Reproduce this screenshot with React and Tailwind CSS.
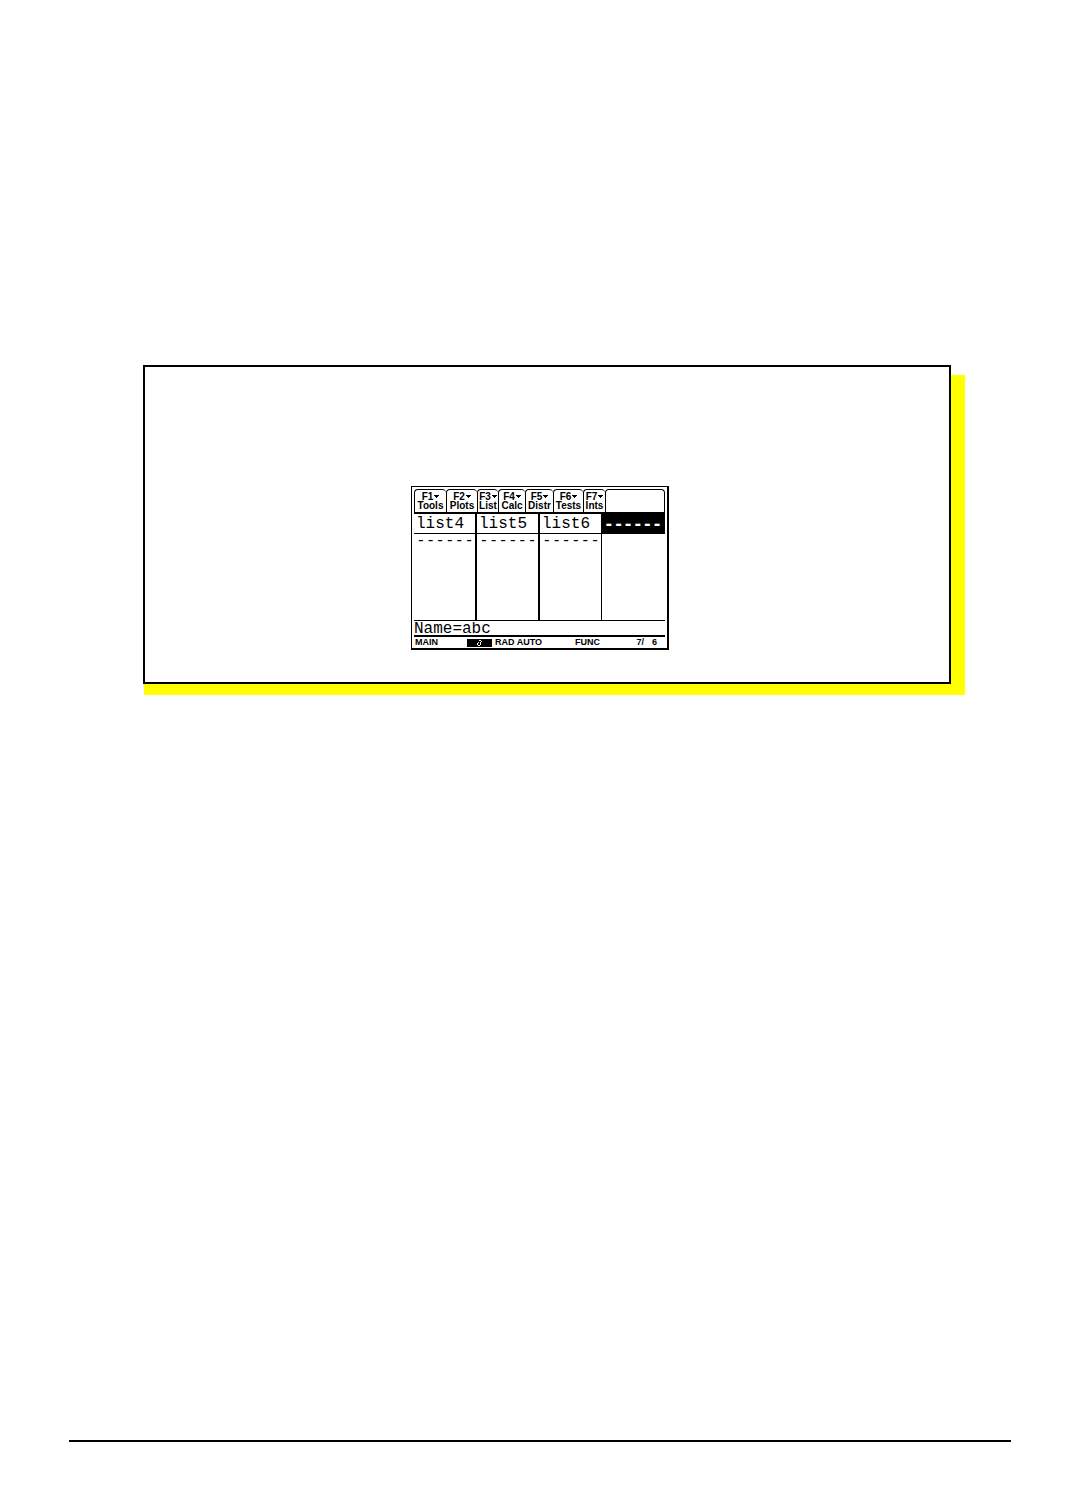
const TABS = [
  { k: 'F1', label: 'Tools', w: 'w-8' },
  { k: 'F2', label: 'Plots', w: 'w-[31px]' },
  { k: 'F3', label: 'List', w: 'w-[21px]' },
  { k: 'F4', label: 'Calc', w: 'w-[27px]' },
  { k: 'F5', label: 'Distr', w: 'w-7' },
  { k: 'F6', label: 'Tests', w: 'w-[30px]' },
  { k: 'F7', label: 'Ints', w: 'w-[22px]' },
];

const DASHES = '------';

function Toolbar() {
  return (
    <div className="flex h-[25px] border-b-2 border-black">
      {TABS.map((t) => (
        <button
          key={t.k}
          type="button"
          className={`${t.w} flex shrink-0 flex-col items-center justify-end rounded-t-[4px] border-t border-l border-black pb-0.5 text-[10px] leading-[9px] font-bold whitespace-nowrap`}
        >
          <span className="flex items-center gap-px">
            {t.k}
            <svg width="5" height="3" viewBox="0 0 5 3" shapeRendering="crispEdges" aria-hidden="true">
              <path d="M0 0h5v1H4v1H3v1H2V2H1V1H0z" />
            </svg>
          </span>
          <span>{t.label}</span>
        </button>
      ))}
      <div className="grow rounded-t-[4px] border-x border-t border-black" />
    </div>
  );
}

function Lists() {
  return (
    <table className="h-[106px] w-full table-fixed border-separate border-spacing-0 text-left font-['Liberation_Mono',monospace] text-base leading-[17px]">
      <thead>
        <tr className="h-5">
          <th className="w-[63px] border-r-2 border-b border-black p-0 pt-0.5 pl-0.5 font-normal">list4</th>
          <th className="w-[63px] border-r-2 border-b border-black p-0 pt-0.5 pl-0.5 font-normal">list5</th>
          <th className="w-[62px] border-r border-b border-black p-0 pt-0.5 pl-0.5 font-normal">list6</th>
          <th className="border-b border-black bg-black p-0 pl-0.5 font-['DejaVu_Sans_Mono',monospace] font-bold text-white">{DASHES}</th>
        </tr>
      </thead>
      <tbody>
        <tr className="align-top font-['DejaVu_Sans_Mono',monospace] leading-3">
          <td className="border-r-2 border-black p-0 pl-0.5">{DASHES}</td>
          <td className="border-r-2 border-black p-0 pl-0.5">{DASHES}</td>
          <td className="border-r border-black p-0 pl-0.5">{DASHES}</td>
          <td className="p-0" />
        </tr>
      </tbody>
    </table>
  );
}

function StatusBar() {
  return (
    <div className="flex h-[11px] items-center text-[9px] leading-[11px] font-bold whitespace-nowrap">
      <span className="w-[53px] pl-px">MAIN</span>
      <span className="flex h-2 w-[25px] items-center justify-center bg-black">
        <svg width="5" height="6" viewBox="0 0 5 6" shapeRendering="crispEdges" aria-hidden="true">
          <path d="M0 3h1v2H0zM1 5h2v1H1zM3 2h1v3H3zM2 0h2v1H2zM4 1h1v1H4zM1 2h1v1H1z" fill="white" />
        </svg>
      </span>
      <span className="w-[83px] pl-[3px]">RAD AUTO</span>
      <span>FUNC</span>
      <span className="ml-auto flex gap-2 pr-2">
        <span>7/</span>
        <span>6</span>
      </span>
    </div>
  );
}

function CalculatorScreen() {
  return (
    <section
      aria-label="Calculator screen"
      className="w-[258px] border-t border-r-2 border-b-2 border-l border-black bg-white pt-0.5 pr-0.5 pl-0.5"
    >
      <Toolbar />
      <Lists />
      <div className="flex h-[17px] items-baseline border-t border-b-2 border-black font-['Liberation_Mono',monospace] text-base leading-4">
        <label htmlFor="name">Name=</label>
        <input id="name" defaultValue="abc" className="h-[14px] w-24 bg-transparent p-0 outline-none" />
      </div>
      <StatusBar />
    </section>
  );
}

export default function App() {
  return (
    <div className="flex min-h-screen flex-col bg-white pt-[365px] pb-[70px] font-['Liberation_Sans',Arial,sans-serif] text-black">
      <main className="mr-[129px] ml-[143px] flex justify-center border-2 border-black bg-white pt-[119px] pr-3.5 pb-8 shadow-[1px_11px_0_0_#ffff00,14px_11px_0_0_#ffff00,14px_10px_0_0_#ffff00]">
        <CalculatorScreen />
      </main>
      <hr className="mx-[69px] mt-auto border-0 border-t-2 border-black" />
    </div>
  );
}
